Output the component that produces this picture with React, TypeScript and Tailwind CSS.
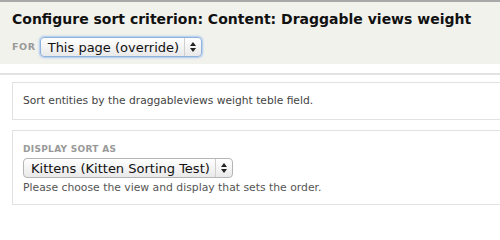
import type { ReactElement } from "react";

function Arrows(): ReactElement {
	return (
		<svg width="6" height="10" viewBox="0 0 6 10" className="text-[#222]">
			<path d="M3 0 L6 4 L0 4 Z" fill="currentColor" />
			<path d="M3 10 L6 6 L0 6 Z" fill="currentColor" />
		</svg>
	);
}

function FakeSelect({ label, focused }: { label: string; focused?: boolean }): ReactElement {
	return (
		<div
			className={
				"flex h-[20px] items-stretch rounded-[4px] border bg-gradient-to-b from-white to-[#e9e9e9] text-[13px] text-[#111] " +
				(focused ? "border-[#8fb2dc] shadow-[0_0_2px_1px_#a9c8ee]" : "border-[#b5b5b5]")
			}
		>
			<span className="flex items-center pl-[7px] pr-[5px] leading-none">{label}</span>
			<span className="flex w-[17px] items-center justify-center border-l border-[#cfcfcf]">
				<Arrows />
			</span>
		</div>
	);
}

export default function App(): ReactElement {
	return (
		<div className="h-[216px] w-[500px] overflow-hidden bg-white font-['DejaVu_Sans',Verdana,sans-serif]">
			<div className="h-[2px] bg-[#a8a8a8]" />
			<div className="h-[62px] bg-[#f2f2ed] px-[12px] pt-[9px]">
				<h1 className="whitespace-nowrap text-[14px] font-bold leading-[17px] text-[#111]">
					Configure sort criterion: Content: Draggable views weight
				</h1>
				<div className="mt-[9px] flex items-center gap-[4px]">
					<span className="text-[9.5px] font-bold tracking-[0.6px] text-[#999]">FOR</span>
					<FakeSelect label="This page (override)" focused />
				</div>
			</div>
			<div className="mt-[9px] h-[2px] bg-[#e2e2e2]" />
			<div className="pl-[12px] pt-[7px]">
				<div className="border border-r-0 border-[#e2e2e2] px-[10px] pb-[11px] pt-[10px] text-[10.7px] leading-[15px] text-[#444]">
					Sort entities by the draggableviews weight teble field.
				</div>
				<div className="mt-[10px] border border-r-0 border-[#e2e2e2] px-[10px] pb-[9px] pt-[12px]">
					<div className="text-[9px] font-bold leading-[12px] tracking-[0.3px] text-[#999]">DISPLAY SORT AS</div>
					<div className="mt-[3px] flex">
						<FakeSelect label="Kittens (Kitten Sorting Test)" />
					</div>
					<div className="mt-[3px] text-[10.8px] leading-[14px] text-[#555]">
						Please choose the view and display that sets the order.
					</div>
				</div>
			</div>
		</div>
	);
}
